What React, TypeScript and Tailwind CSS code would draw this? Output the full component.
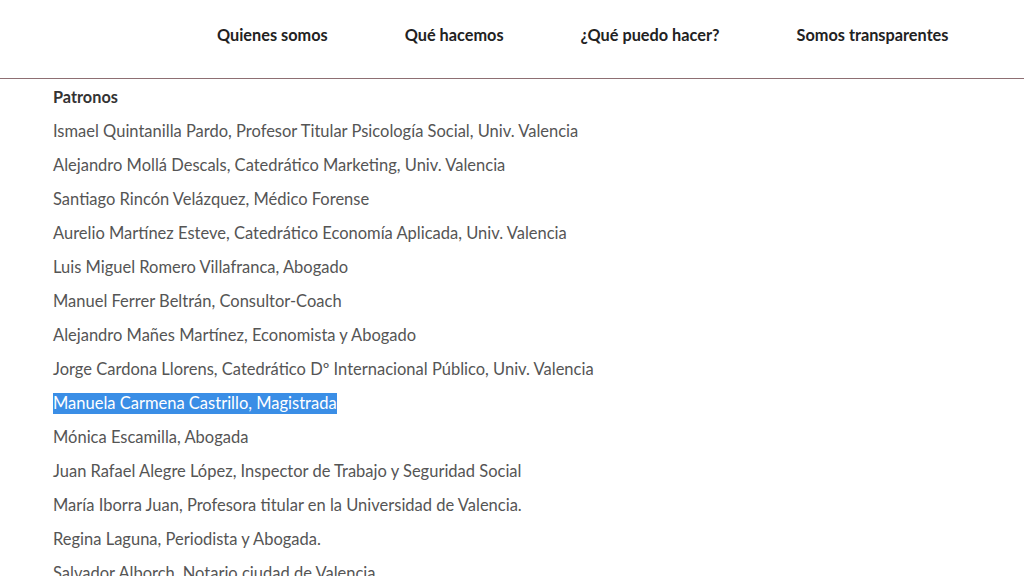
import React from 'react';

const nav = ['Quienes somos', 'Qué hacemos', '¿Qué puedo hacer?', 'Somos transparentes'];

const patronos = [
  'Ismael Quintanilla Pardo, Profesor Titular Psicología Social, Univ. Valencia',
  'Alejandro Mollá Descals, Catedrático Marketing, Univ. Valencia',
  'Santiago Rincón Velázquez, Médico Forense',
  'Aurelio Martínez Esteve, Catedrático Economía Aplicada, Univ. Valencia',
  'Luis Miguel Romero Villafranca, Abogado',
  'Manuel Ferrer Beltrán, Consultor-Coach',
  'Alejandro Mañes Martínez, Economista y Abogado',
  'Jorge Cardona Llorens, Catedrático Dº Internacional Público, Univ. Valencia',
  'Manuela Carmena Castrillo, Magistrada',
  'Mónica Escamilla, Abogada',
  'Juan Rafael Alegre López, Inspector de Trabajo y Seguridad Social',
  'María Iborra Juan, Profesora titular en la Universidad de Valencia.',
  'Regina Laguna, Periodista y Abogada.',
  'Salvador Alborch, Notario ciudad de Valencia',
];

const App: React.FC = () => {
  return (
    <div className="w-[1024px] h-[576px] overflow-hidden bg-white font-['Lato',sans-serif]">
      <header className="h-[79px] border-b border-[#8e6f73] flex items-center pl-[217px] pb-[8px]">
        <nav className="flex gap-[77px]">
          {nav.map((item) => (
            <a key={item} className="text-[16.3px] font-bold text-[#222]">
              {item}
            </a>
          ))}
        </nav>
      </header>

      <section className="pl-[53px] pt-[1px]">
        <h3 className="h-[34px] flex items-center text-[16.3px] font-bold text-[#333]">Patronos</h3>
        <ul>
          {patronos.map((p, i) => (
            <li key={i} className="h-[34px] flex items-center text-[16.5px] text-[#555]">
              {i === 8 ? (
                <span className="bg-[#3a8ee6] text-white leading-[21px]">{p}</span>
              ) : (
                p
              )}
            </li>
          ))}
        </ul>
      </section>
    </div>
  );
};

export default App;
